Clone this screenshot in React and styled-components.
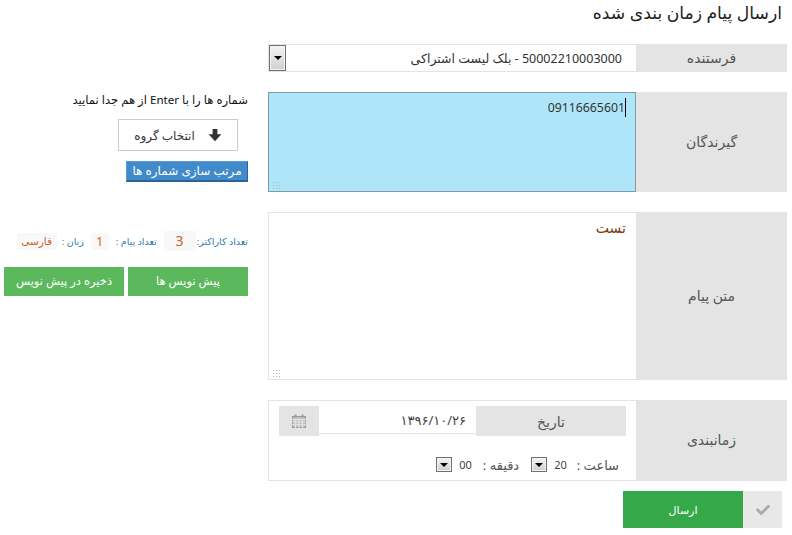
import React from 'react'
import styled, { createGlobalStyle } from 'styled-components'
import { FaCheck } from 'react-icons/fa'

const FONT = '"Noto Sans", "DejaVu Sans", sans-serif'

const GlobalStyle = createGlobalStyle`
  html, body {
    margin: 0;
    padding: 0;
    background: #fff;
  }
  body {
    font-family: ${FONT};
    color: #333;
  }
`

const App = () => (
  <>
    <GlobalStyle />
    <Page dir="rtl">
      <Title>ارسال پیام زمان بندی شده</Title>
      <Columns>
        <Form>
          <Row $h={28}>
            <Label>فرستنده</Label>
            <SenderField>
              <span>50002210003000 - بلک لیست اشتراکی</span>
              <SelectArrow $big />
            </SenderField>
          </Row>
          <Row $h={100}>
            <Label>گیرندگان</Label>
            <Receivers>
              <NumberText dir="ltr">09116665601<Caret /></NumberText>
              <Grip />
            </Receivers>
          </Row>
          <Row $h={168}>
            <Label>متن پیام</Label>
            <MessageBox>
              <MessageText>تست</MessageText>
              <Grip />
            </MessageBox>
          </Row>
          <Row $h={81}>
            <Label>زمانبندی</Label>
            <ScheduleBox>
              <DateRow>
                <DateLabel>تاریخ</DateLabel>
                <DateValue>۱۳۹۶/۱۰/۲۶</DateValue>
                <CalendarButton>
                  <svg width="14" height="14" viewBox="0 0 14 14" fill="none" stroke="#999" strokeWidth="1">
                    <rect x="0.5" y="2.5" width="13" height="11" fill="#c4c4c4" />
                    <path d="M0 5.5H14M0 8H14M0 10.7H14M3.5 5V14M7 5V14M10.5 5V14" stroke="#e4e4e4" />
                    <path d="M3.5 0.5V3.5M10.5 0.5V3.5" strokeWidth="2" />
                  </svg>
                </CalendarButton>
              </DateRow>
              <TimeRow>
                <TimeText $gap={10}>ساعت :</TimeText>
                <TimeValue>20</TimeValue>
                <SelectArrow />
                <TimeText $gap={11} $first>دقیقه :</TimeText>
                <TimeValue>00</TimeValue>
                <SelectArrow />
              </TimeRow>
            </ScheduleBox>
          </Row>
          <SendBar>
            <CheckBox><FaCheck /></CheckBox>
            <SendButton>ارسال</SendButton>
          </SendBar>
        </Form>
        <Side>
          <Hint>شماره ها را با Enter از هم جدا نمایید</Hint>
          <GroupButton>
            <svg width="14" height="14" viewBox="0 0 14 14" fill="#333">
              <path d="M4.6 1H9.4V6.2H13.4L7 13.2L0.6 6.2H4.6Z" />
            </svg>
            <span>انتخاب گروه</span>
          </GroupButton>
          <SortButton>مرتب سازی شماره ها</SortButton>
          <Counters>
            <CounterLabel>تعداد کاراکتر:</CounterLabel>
            <CounterValue $big>3</CounterValue>
            <CounterLabel>تعداد پیام :</CounterLabel>
            <CounterValue>1</CounterValue>
            <CounterLabel>زبان :</CounterLabel>
            <CounterValue $text>فارسی</CounterValue>
          </Counters>
          <DraftButtons>
            <DraftButton>پیش نویس ها</DraftButton>
            <DraftButton>ذخیره در پیش نویس</DraftButton>
          </DraftButtons>
        </Side>
      </Columns>
    </Page>
  </>
)

const Page = styled.div`
  width: 792px;
  height: 535px;
  overflow: hidden;
  box-sizing: border-box;
  padding: 0 5px 0 4px;
`

const Title = styled.h1`
  margin: 0;
  height: 44px;
  padding: 1px 5px 0 0;
  box-sizing: border-box;
  font-size: 17.2px;
  line-height: 24px;
  font-weight: normal;
  color: #222;
`

const Columns = styled.div`
  display: flex;
  gap: 20px;
`

const Form = styled.div`
  width: 519px;
  display: flex;
  flex-direction: column;
  gap: 20px;
`

const Row = styled.div`
  display: flex;
  height: ${(p) => p.$h}px;
`

const Label = styled.div`
  width: 151px;
  flex: none;
  box-sizing: border-box;
  padding-bottom: 2px;
  background: #e4e4e4;
  color: #555;
  font-size: 14px;
  display: flex;
  align-items: center;
  justify-content: center;
`

const SenderField = styled.div`
  flex: 1;
  box-sizing: border-box;
  border: 1px solid #e4e4e4;
  border-right: 0;
  display: flex;
  align-items: center;
  justify-content: space-between;
  padding: 0 14px 0 0;
  font-size: 12.5px;
  color: #333;
`

const SelectArrow = styled.span`
  flex: none;
  position: relative;
  display: inline-block;
  box-sizing: border-box;
  width: ${(p) => (p.$big ? '17px' : '16px')};
  height: ${(p) => (p.$big ? '26px' : '15px')};
  border: 1px solid #707070;
  box-shadow: inset 0 0 0 1px #f4f4f4;
  background: linear-gradient(#f4f4f4, #cfcfcf);
  &::after {
    content: '';
    position: absolute;
    left: 50%;
    top: 50%;
    margin: -2px 0 0 -4px;
    border: 4px solid transparent;
    border-top: 4px solid #000;
    border-bottom: 0;
  }
`

const Receivers = styled.div`
  flex: 1;
  position: relative;
  box-sizing: border-box;
  background: #aee5f8;
  border: 1px solid #7f9aa8;
  padding: 5px 9px 0 0;
`

const NumberText = styled.div`
  text-align: right;
  font-size: 12.3px;
  line-height: 19px;
  color: #333;
`

const Caret = styled.span`
  display: inline-block;
  width: 1px;
  height: 19px;
  background: #000;
  vertical-align: top;
`

const Grip = styled.span`
  position: absolute;
  left: 3px;
  bottom: 2px;
  width: 8px;
  height: 8px;
  background-image: radial-gradient(circle, #b4b4b4 1px, transparent 1px);
  background-size: 3px 3px;
`

const MessageBox = styled.div`
  flex: 1;
  position: relative;
  box-sizing: border-box;
  border: 1px solid #e4e4e4;
  border-right: 0;
  padding: 6px 10px 0 0;
`

const MessageText = styled.div`
  font-size: 14px;
  line-height: 18px;
  color: #7a3b10;
`

const ScheduleBox = styled.div`
  flex: 1;
  box-sizing: border-box;
  border: 1px solid #e4e4e4;
  border-right: 0;
  padding: 5px 10px 0;
`

const DateRow = styled.div`
  display: flex;
  height: 30px;
`

const DateLabel = styled.div`
  width: 150px;
  background: #e4e4e4;
  color: #555;
  font-size: 14px;
  display: flex;
  align-items: center;
  justify-content: center;
`

const DateValue = styled.div`
  flex: 1;
  box-sizing: border-box;
  height: 28px;
  border-bottom: 1px solid #e4e4e4;
  padding: 0 10px;
  font-size: 13px;
  line-height: 28px;
  color: #444;
`

const CalendarButton = styled.div`
  width: 40px;
  background: #e4e4e4;
  display: flex;
  align-items: center;
  justify-content: center;
`

const TimeRow = styled.div`
  display: flex;
  align-items: center;
  height: 15px;
  margin-top: 21px;
  padding-right: 7px;
`

const TimeText = styled.span`
  font-size: 13px;
  color: #555;
  white-space: nowrap;
  margin-left: ${(p) => p.$gap}px;
  margin-right: ${(p) => (p.$first ? '12px' : '0')};
`

const TimeValue = styled.span`
  font-size: 11px;
  color: #444;
  margin-left: 7px;
`

const SendBar = styled.div`
  display: flex;
  height: 37px;
  margin: -10px 5px 0 0;
`

const CheckBox = styled.div`
  width: 39px;
  background: #e8e8e8;
  color: #aaa;
  font-size: 14px;
  display: flex;
  align-items: center;
  justify-content: center;
`

const SendButton = styled.button`
  width: 120px;
  border: 0;
  padding: 0;
  background: #35a94a;
  color: #fff;
  font-family: ${FONT};
  font-size: 11px;
`

const Side = styled.div`
  width: 244px;
  display: flex;
  flex-direction: column;
  align-items: flex-start;
`

const Hint = styled.div`
  margin-top: 49px;
  height: 14px;
  font-size: 11.6px;
  line-height: 14px;
  color: #111;
`

const GroupButton = styled.div`
  width: 120px;
  height: 32px;
  margin: 12px 10px 0 0;
  box-sizing: border-box;
  border: 1px solid #ccc;
  display: flex;
  align-items: center;
  justify-content: center;
  gap: 13px;
  font-size: 12px;
  color: #333;
`

const SortButton = styled.div`
  width: 122px;
  height: 21px;
  margin-top: 10px;
  box-sizing: border-box;
  background: #428bca;
  border-top: 1px solid #5a9bd4;
  border-left: 1px solid #5a9bd4;
  border-bottom: 2px solid #2a6496;
  border-right: 1px solid #2a6496;
  color: #fff;
  font-size: 12px;
  line-height: 18px;
  text-align: center;
`

const Counters = styled.div`
  display: flex;
  align-items: center;
  height: 22px;
  margin-top: 48px;
`

const CounterLabel = styled.span`
  font-size: 9.5px;
  color: #2a7ab0;
  white-space: nowrap;
`

const CounterValue = styled.span`
  background: #f8f8f8;
  color: #c8622e;
  font-size: ${(p) => (p.$big ? '14px' : p.$text ? '10.5px' : '12px')};
  line-height: ${(p) => (p.$big ? '20px' : '17px')};
  text-align: center;
  width: ${(p) => (p.$big ? '32px' : p.$text ? '40px' : '18px')};
  margin: ${(p) => (p.$big ? '0 1px 0 7px' : p.$text ? '0 5px 0 0' : '0 7px')};
`

const DraftButtons = styled.div`
  display: flex;
  gap: 4px;
  margin-top: 15px;
`

const DraftButton = styled.div`
  width: 120px;
  height: 29px;
  background: #5cb85c;
  color: #fff;
  font-size: 11.5px;
  line-height: 28px;
  text-align: center;
`

export default App
